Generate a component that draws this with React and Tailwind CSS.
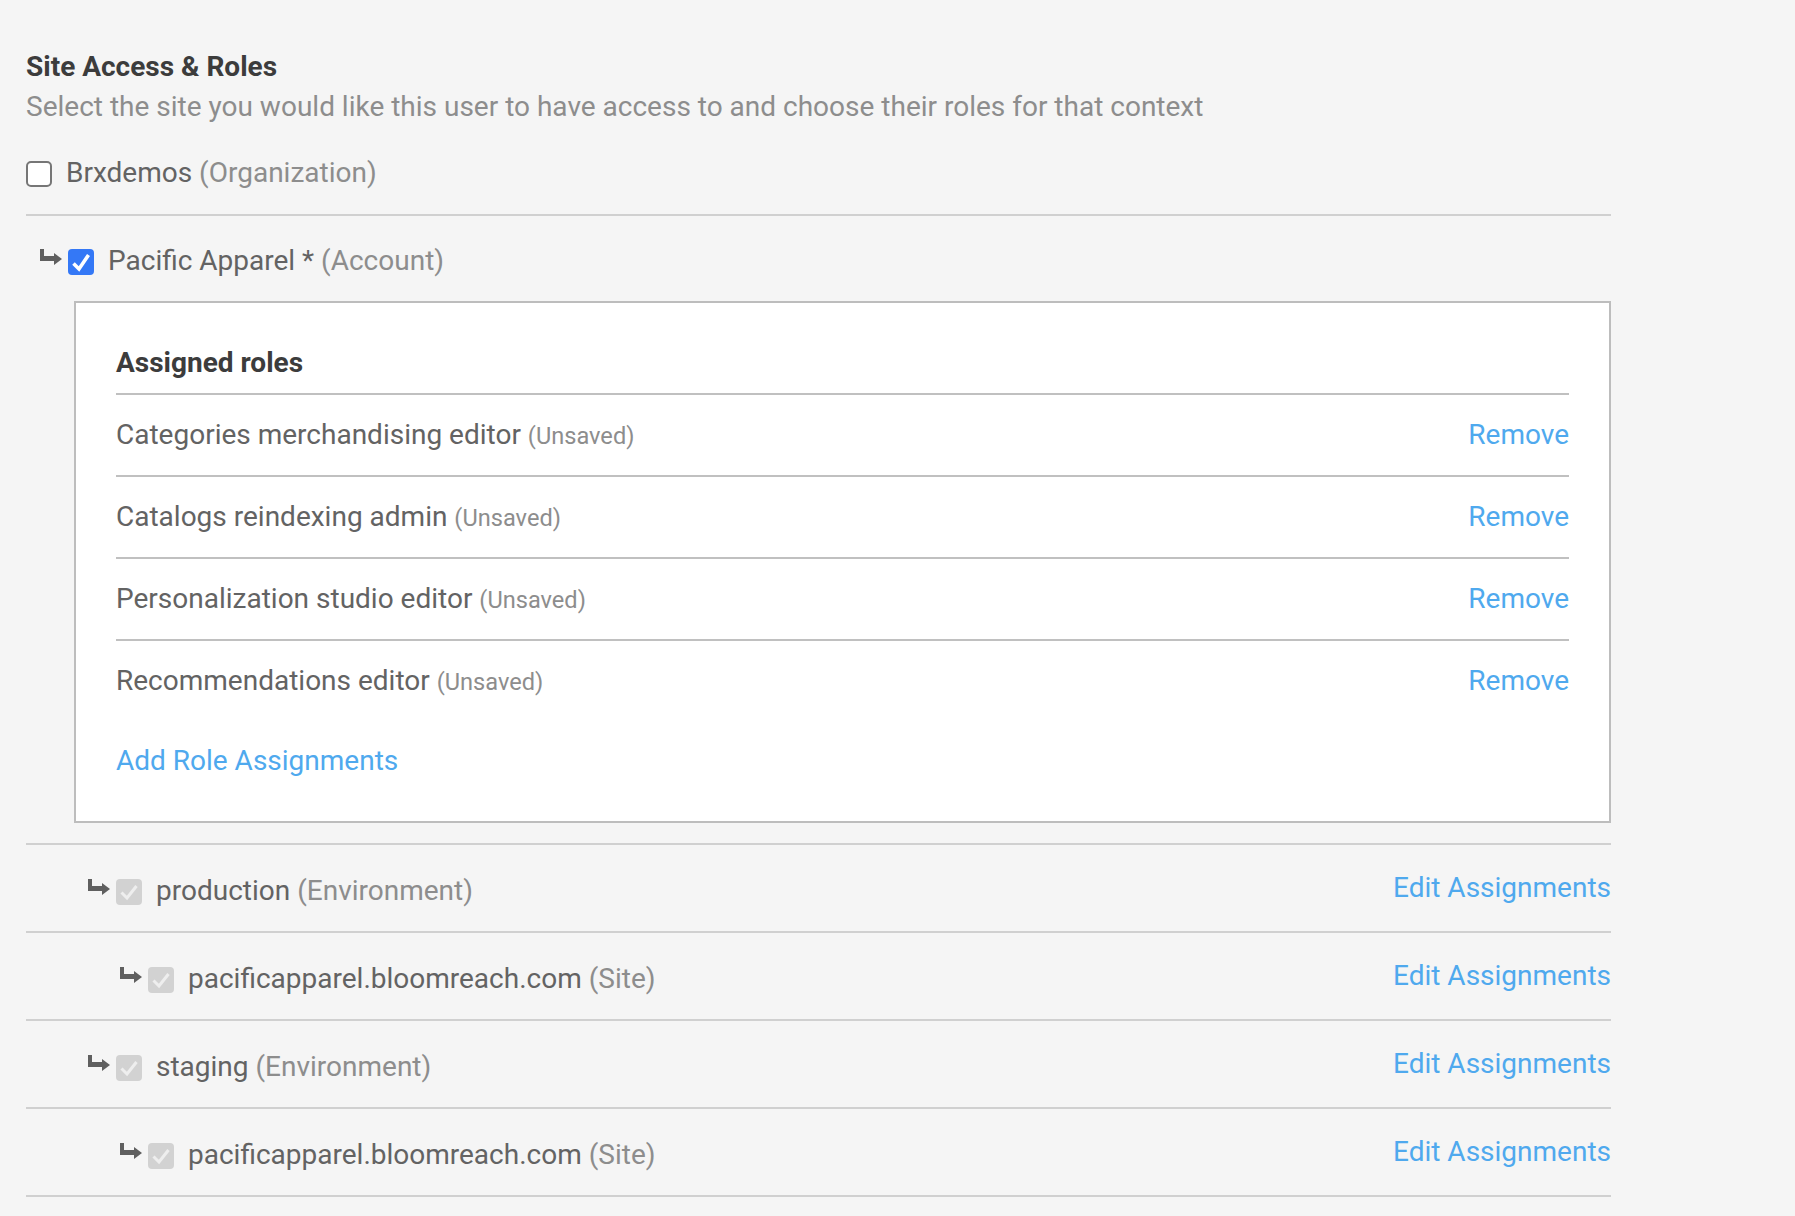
function Arrow() {
  return (
    <svg width="22" height="16" viewBox="0 0 22 16" className="mt-[6px] shrink-0 text-[#5f5f5f]">
      <path d="M0 0h4v7h10V4l8 6-8 6v-4H0z" fill="currentColor" />
    </svg>
  );
}

function Box({ state }) {
  if (state === "on")
    return (
      <span className="ml-[6px] mt-[6px] flex h-[26px] w-[26px] shrink-0 rounded-[4px] bg-[#3478f6]">
        <svg width="26" height="26" viewBox="0 0 26 26"><path d="M5.5 14.5l5.5 5.5L20.5 6" fill="none" stroke="#fff" strokeWidth="3.6" /></svg>
      </span>
    );
  if (state === "dis")
    return (
      <span className="ml-[6px] mt-[6px] flex h-[26px] w-[26px] shrink-0 rounded-[4px] bg-[#d2d2d2]">
        <svg width="26" height="26" viewBox="0 0 26 26"><path d="M5.5 13.5l5.5 5.5L20.5 7" fill="none" stroke="#eeeeee" strokeWidth="3" /></svg>
      </span>
    );
  return <span className="mt-[6px] h-[26px] w-[26px] shrink-0 rounded-[5px] border-2 border-[#767676] bg-white" />;
}

function Tree({ indent, name, kind }) {
  return (
    <div className={`flex h-[88px] items-center justify-between border-b-2 border-[#d0d0d0] ${indent}`}>
      <div className="flex items-start pt-[3px]">
        <Arrow />
        <Box state="dis" />
        <span className="ml-[14px] translate-y-[1px] text-[#636363]">{name} <span className="text-[#8d8d8d]">({kind})</span></span>
      </div>
      <a className="text-[#4fa9ee]">Edit Assignments</a>
    </div>
  );
}

function Role({ name, last }) {
  return (
    <div className={`flex items-center justify-between ${last ? "h-[80px]" : "h-[82px] border-b-2 border-[#c0c0c0]"}`}>
      <span className="text-[#636363]">{name} <span className="text-[23.6px] text-[#8d8d8d]">(Unsaved)</span></span>
      <a className="text-[#4fa9ee]">Remove</a>
    </div>
  );
}

export default function App() {
  return (
    <div className="min-h-[1216px] bg-[#f5f5f5] pl-[26px] pr-[184px] pt-[50px] font-['Roboto',sans-serif] text-[28px] leading-[34px]">
      <h2 className="font-bold text-[#3c3c3c]">Site Access &amp; Roles</h2>
      <p className="mt-[6px] text-[#8d8d8d]">Select the site you would like this user to have access to and choose their roles for that context</p>
      <div className="mt-[32px] flex h-[60px] items-start border-b-2 border-[#d0d0d0]">
        <div className="-mt-[1px] flex items-start">
          <Box />
        </div>
        <span className="ml-[14px] text-[#636363]">Brxdemos <span className="text-[#8d8d8d]">(Organization)</span></span>
      </div>
      <div className="mt-[28px] flex items-start pl-[14px]">
        <div className="-mt-[1px] flex items-start">
          <Arrow />
          <Box state="on" />
        </div>
        <span className="ml-[14px] text-[#636363]">Pacific Apparel * <span className="text-[#8d8d8d]">(Account)</span></span>
      </div>
      <div className="ml-[48px] mt-[23px] h-[522px] border-2 border-[#bdbdbd] bg-white px-[40px] pt-[43px]">
        <div className="border-b-2 border-[#c0c0c0] pb-[13px] font-bold text-[#3c3c3c]">Assigned roles</div>
        <Role name="Categories merchandising editor" />
        <Role name="Catalogs reindexing admin" />
        <Role name="Personalization studio editor" />
        <Role name="Recommendations editor" last />
        <a className="mt-[23px] block text-[#4fa9ee]">Add Role Assignments</a>
      </div>
      <div className="mt-[20px] border-t-2 border-[#d0d0d0]">
        <Tree indent="pl-[62px]" name="production" kind="Environment" />
        <Tree indent="pl-[94px]" name="pacificapparel.bloomreach.com" kind="Site" />
        <Tree indent="pl-[62px]" name="staging" kind="Environment" />
        <Tree indent="pl-[94px]" name="pacificapparel.bloomreach.com" kind="Site" />
      </div>
    </div>
  );
}
